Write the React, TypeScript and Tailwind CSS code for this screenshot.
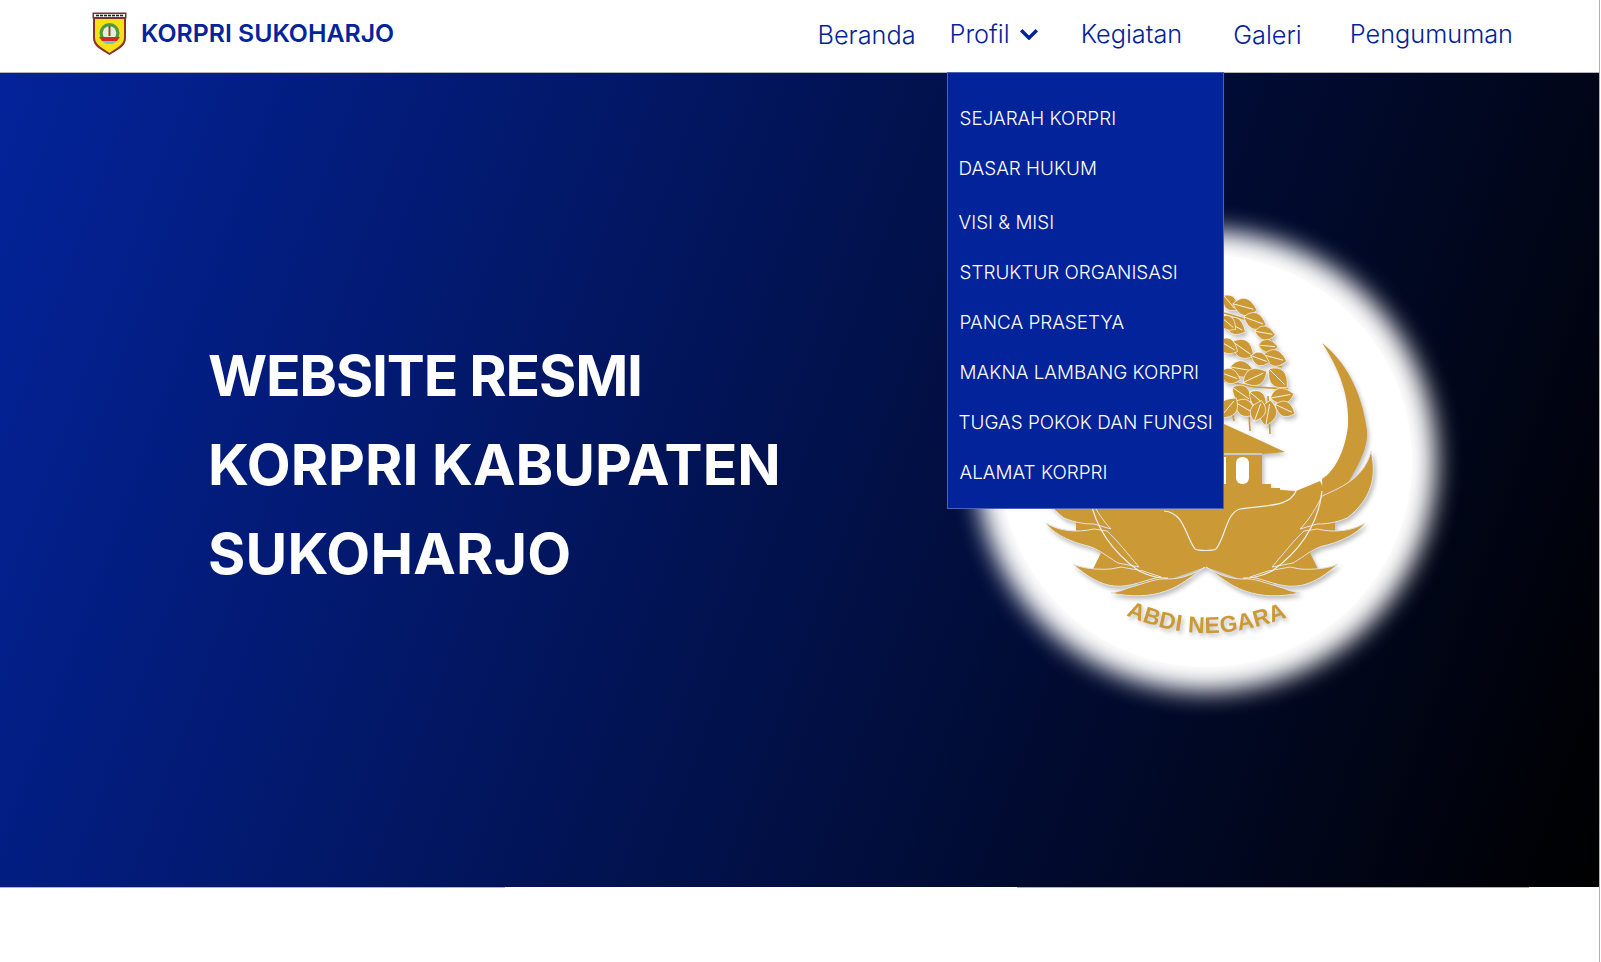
import React from "react";

const GOLD = "#cb9a36";
const menu: [string, string][] = [
  ["SEJARAH KORPRI", "ml-[12px] mt-[21px]"],
  ["DASAR HUKUM", "ml-[11px]"],
  ["VISI & MISI", "ml-[11px] mt-[4px]"],
  ["STRUKTUR ORGANISASI", "ml-[12px]"],
  ["PANCA PRASETYA", "ml-[12px]"],
  ["MAKNA LAMBANG KORPRI", "ml-[12px]"],
  ["TUGAS POKOK DAN FUNGSI", "ml-[11px]"],
  ["ALAMAT KORPRI", "ml-[12px]"],
];

const leaves: [number, number, number, number][] = [
  [1230, 302, 50, 20], [1245, 306, 15, 25], [1255, 320, 20, 24], [1235, 325, 30, 24], [1265, 332, 10, 21],
  [1268, 345, 5, 20], [1243, 348, 35, 26], [1275, 357, 15, 24], [1242, 368, 10, 24], [1255, 376, -25, 26],
  [1278, 377, 45, 26], [1282, 395, -10, 24], [1242, 393, 35, 24], [1258, 398, 40, 22], [1245, 407, 30, 24],
  [1268, 412, -80, 26], [1285, 408, 25, 22], [1228, 407, -50, 26], [1258, 410, -70, 22], [1228, 345, 30, 22],
  [1230, 375, 20, 22], [1260, 358, 20, 20], [1228, 322, 40, 20],
];

function Leaf({ x, y, a, l }: { x: number; y: number; a: number; l: number }) {
  const h = l / 2;
  const w = l * 0.42;
  return (
    <g transform={`translate(${x} ${y}) rotate(${a})`}>
      <path d={`M${-h} 0 Q${-h * 0.2} ${-w * 1.6} ${h} 0 Q${h * 0.1} ${w * 1.6} ${-h} 0Z`} fill={GOLD} stroke="#fff" strokeWidth="0.6" />
      <path d={`M${-h} 0 L${h * 0.7} 0`} stroke="#fff" strokeWidth="0.8" fill="none" />
    </g>
  );
}

function Wing() {
  return (
    <g fill={GOLD} stroke="#e4e4e4" strokeWidth="1">
      <path d="M1200 483 L1296 490 L1320 480 L1335 515 L1335 535 L1310 552 L1318 568 L1295 580 L1260 585 L1206 566 L1200 566Z" stroke="none" />
      <path d="M1371 450 C1377 475 1372 498 1347 517 C1335 522 1326 523 1317 523 L1300 528 C1310 518 1317 505 1322 495 C1345 485 1365 475 1371 450Z" />
      <path d="M1365 522 C1360 530 1345 540 1323 545 C1312 548 1305 555 1293 562 L1272 566 C1284 552 1295 538 1304 530 L1317 528 C1335 532 1352 530 1365 522Z" />
      <path d="M1338 563 C1325 575 1310 584 1297 585 C1280 587 1265 578 1250 576 L1268 570 L1290 566 L1300 568 C1315 569 1330 567 1338 563Z" />
      <path d="M1300 592 C1280 596 1262 596 1245 590 C1230 585 1218 574 1206 566 C1215 572 1228 578 1243 578 C1255 577 1265 582 1283 587 C1290 590 1295 591 1300 592Z" />
    </g>
  );
}

function Emblem() {
  return (
    <svg viewBox="1030 280 370 370" className="absolute left-[30px] top-[26px] h-[370px] w-[370px] drop-shadow-[2px_3px_2px_rgba(0,0,0,0.25)]">
      <g stroke={GOLD} strokeWidth="1.6" fill="none">
        <path d="M1224 350 L1262 360 L1282 366" />
        <path d="M1224 380 L1255 386 L1288 388" />
        <path d="M1224 312 L1258 322 L1272 340" />
        <path d="M1248 395 L1250 430 M1268 395 L1270 433 M1230 400 L1234 420" />
      </g>
      {leaves.map(([x, y, a, l], i) => (
        <Leaf key={i} x={x} y={y} a={a} l={l} />
      ))}
      <path d="M1322 342 C1345 360 1362 390 1367 430 C1368 448 1358 465 1345 487 C1340 495 1332 500 1323 505 L1322 478 C1335 470 1345 450 1348 425 C1350 395 1338 365 1322 342Z" fill={GOLD} />
      <g transform="matrix(-1 0 0 1 2411 0)">
        <Wing />
      </g>
      <Wing />
      <path d="M1224 423 L1285 451 L1262 453 L1262 483 L1271 483 L1271 487 L1280 487 L1280 492 L1296 490 L1296 510 L1160 510 L1160 423Z" fill={GOLD} />
      <rect x="1236" y="456" width="13" height="27" rx="6" fill="#fff" />
      <rect x="1224" y="456" width="2" height="27" fill="#fff" />
      <rect x="1224" y="452" width="38" height="2" fill="#c9c9c9" />
      <g stroke="#f0f0f0" strokeWidth="1.2" fill="none">
        <path d="M1296 490 C1290 505 1270 504 1240 508 C1226 512 1226 535 1216 548 C1212 550 1199 550 1195 548 C1185 535 1185 512 1164 510" />
        <path d="M1322 490 C1318 525 1300 550 1272 570 C1262 575 1250 578 1243 577" />
        <path d="M1089 490 C1093 525 1111 550 1139 570 C1149 575 1161 578 1168 577" />
      </g>
      <path id="abdi" d="M1126 614 Q1205 650 1292 614" fill="none" stroke="none" />
      <text fontFamily="'Liberation Sans', sans-serif" fontWeight="700" fontSize="23" letterSpacing="0.35" fill={GOLD}>
        <textPath href="#abdi">ABDI NEGARA</textPath>
      </text>
    </svg>
  );
}

function Logo() {
  return (
    <svg viewBox="0 0 35 43" className="h-[43px] w-[35px] shrink-0">
      <path d="M1 6 H34 V26 C34 35 25 38 17.5 43 C10 38 1 35 1 26Z" fill="#8a3328" />
      <path d="M3 7 H32 V26 C32 33 24 36 17.5 41 C11 36 3 33 3 26Z" fill="#f6e016" />
      <rect x="0.5" y="0.5" width="34" height="6" fill="#6b3a35" />
      <rect x="2" y="2" width="31" height="3" fill="#eee" />
      <path d="M4 3.5 H31" stroke="#222" strokeWidth="1.4" strokeDasharray="3 1" />
      <circle cx="17.5" cy="21" r="10" fill="#4f9a45" />
      <circle cx="17.5" cy="21" r="6.8" fill="#e9ecd9" />
      <path d="M16.5 14 H18.5 V24 H16.5Z" fill="#7a5a2a" />
      <path d="M7 25 H28 L25 29 H10Z" fill="#d02a2a" />
      <path d="M10 29 H25 L21 32 H14Z" fill="#6fc3d8" />
    </svg>
  );
}

export default function App() {
  return (
    <div className="h-[962px] w-[1600px] overflow-hidden border-r border-[#b0b0b0] bg-white font-['Inter',sans-serif]">
      <header className="relative z-10 flex h-[73px] items-center border-b border-[#b5b5b5] bg-white pb-[5px] pl-[92px]">
        <Logo />
        <span className="ml-[14px] text-[24.8px] font-semibold text-[#03239a]">KORPRI SUKOHARJO</span>
        <nav className="ml-auto mt-[1px] flex items-center text-[25.3px] font-[350] text-[#03239a]">
          <span className="mt-[2px]">Beranda</span>
          <span className="relative ml-[34px] flex items-center">
            Profil
            <svg viewBox="0 0 18 11" className="ml-[10px] h-[11px] w-[18px]" fill="none" stroke="#03239a" strokeWidth="3.4">
              <path d="M1.2 1.2 L9 9 L16.8 1.2" />
            </svg>
            <div className="absolute left-[-3px] top-[57px] h-[437px] w-[277px] border border-[#4a63b8] bg-[#03239a] text-[18.85px] text-white">
              {menu.map(([t, c]) => (
                <div key={t} className={`flex h-[50px] items-center whitespace-nowrap ${c}`}>{t}</div>
              ))}
            </div>
          </span>
          <span className="ml-[43px]">Kegiatan</span>
          <span className="ml-[51px] mt-[2px]">Galeri</span>
          <span className="ml-[48px] mr-[86px]">Pengumuman</span>
        </nav>
      </header>
      <main className="flex h-[814px] items-center bg-[linear-gradient(110deg,#03239a_0%,#000_100%)]">
        <h1 className="mb-[31px] ml-[208px] w-[700px] shrink-0 text-[57px] font-bold leading-[89px] text-white">
          <span className="tracking-[-1.2px]">WEBSITE RESMI</span><br />
          <span className="tracking-[0px]">KORPRI KABUPATEN</span><br />
          <span className="tracking-[0.2px]">SUKOHARJO</span>
        </h1>
        <div className="relative mb-[39px] ml-[92px] h-[412px] w-[412px] shrink-0 rounded-full bg-white shadow-[0_0_24px_24px_#fff]">
          <Emblem />
        </div>
      </main>
      <div className="flex h-px">
        <div className="w-[505px] bg-[#aab0dc]" />
        <div className="ml-[512px] w-[512px] bg-[#b0b0b0]" />
      </div>
    </div>
  );
}
